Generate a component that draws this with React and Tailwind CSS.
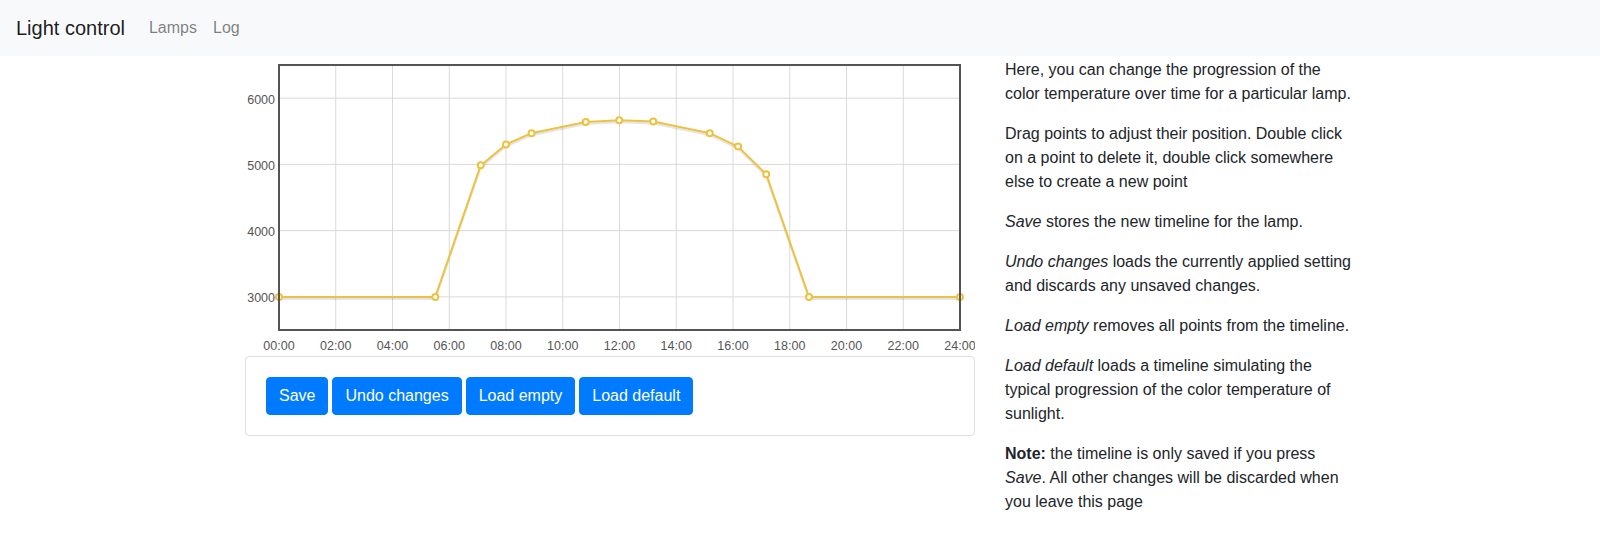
const PLOT = { x: 34, y: 9, w: 681, h: 265 };
const Y_MIN = 2500;
const Y_MAX = 6500;

// timeline points: [hour, kelvin]
const points = [
  [0, 3000],
  [5.51, 3000],
  [7.11, 4985],
  [8.0, 5300],
  [8.9, 5470],
  [10.81, 5640],
  [11.99, 5667],
  [13.19, 5646],
  [15.18, 5471],
  [16.18, 5269],
  [17.17, 4852],
  [18.68, 3000],
  [24, 3000],
];

const px = (h) => PLOT.x + (h * PLOT.w) / 24;
const py = (v) => PLOT.y + ((Y_MAX - v) / (Y_MAX - Y_MIN)) * PLOT.h;

const hours = [0, 2, 4, 6, 8, 10, 12, 14, 16, 18, 20, 22, 24];
const levels = [3000, 4000, 5000, 6000];

function Chart() {
  const d = points.map(([h, v], i) => `${i ? 'L' : 'M'}${px(h).toFixed(1)} ${py(v).toFixed(1)}`).join(' ');
  return (
    <svg width="730" height="300" className="block" style={{ fontFamily: '"Liberation Sans", Arial, sans-serif' }}>
      {/* grid */}
      {hours.slice(1, -1).map((h) => (
        <line key={h} x1={px(h)} x2={px(h)} y1={PLOT.y} y2={PLOT.y + PLOT.h} stroke="#d9d9d9" strokeWidth="1" />
      ))}
      {levels.map((v) => (
        <line key={v} x1={PLOT.x} x2={PLOT.x + PLOT.w} y1={py(v)} y2={py(v)} stroke="#d9d9d9" strokeWidth="1" />
      ))}

      {/* series shadow + line */}
      <path d={d} fill="none" stroke="rgba(0,0,0,0.1)" strokeWidth="2" transform="translate(0 2)" strokeLinejoin="round" />
      <path d={d} fill="none" stroke="#edc240" strokeWidth="2" strokeLinejoin="round" />
      {points.map(([h, v], i) => (
        <circle key={i} cx={px(h)} cy={py(v)} r="3" fill="#fff" stroke="#edc240" strokeWidth="2" />
      ))}

      {/* frame */}
      <rect x={PLOT.x} y={PLOT.y} width={PLOT.w} height={PLOT.h} fill="none" stroke="#545454" strokeWidth="2" />

      {/* tick labels */}
      {levels.map((v) => (
        <text key={v} x="30" y={py(v) + 5.5} textAnchor="end" fontSize="12.5" fill="#555">
          {v}
        </text>
      ))}
      {hours.map((h) => (
        <text key={h} x={px(h)} y="293.5" textAnchor="middle" fontSize="12.5" fill="#555">
          {String(h).padStart(2, '0')}:00
        </text>
      ))}
    </svg>
  );
}

export default function App() {
  const buttons = ['Save', 'Undo changes', 'Load empty', 'Load default'];

  return (
    <div className="min-h-screen bg-white text-[#212529] text-base leading-6" style={{ fontFamily: '"Liberation Sans", Arial, sans-serif' }}>
      {/* Navbar */}
      <nav className="h-14 bg-[#f8f9fa] flex items-center px-4">
        <span className="text-xl leading-[30px] text-black/90 mr-4">Light control</span>
        <span className="px-2 text-black/50">Lamps</span>
        <span className="px-2 text-black/50">Log</span>
      </nav>

      <div className="w-[1140px] mx-auto flex">
        {/* Chart column */}
        <div className="w-[760px] px-[15px]">
          <Chart />
          <div className="border border-black/[0.125] rounded p-5 flex gap-1">
            {buttons.map((b) => (
              <button key={b} className="px-3 py-1.5 text-base leading-6 text-white bg-[#007bff] border border-[#007bff] rounded">
                {b}
              </button>
            ))}
          </div>
        </div>

        {/* Help column */}
        <div className="w-[380px] px-[15px] pt-[1.5px]">
          <p className="mb-4">Here, you can change the progression of the color temperature over time for a particular lamp.</p>
          <p className="mb-4">Drag points to adjust their position. Double click on a point to delete it, double click somewhere else to create a new point</p>
          <p className="mb-4"><em>Save</em> stores the new timeline for the lamp.</p>
          <p className="mb-4"><em>Undo changes</em> loads the currently applied setting and discards any unsaved changes.</p>
          <p className="mb-4"><em>Load empty</em> removes all points from the timeline.</p>
          <p className="mb-4"><em>Load default</em> loads a timeline simulating the typical progression of the color temperature of sunlight.</p>
          <p className="mb-4"><strong>Note:</strong> the timeline is only saved if you press <em>Save</em>. All other changes will be discarded when you leave this page</p>
        </div>
      </div>
    </div>
  );
}
